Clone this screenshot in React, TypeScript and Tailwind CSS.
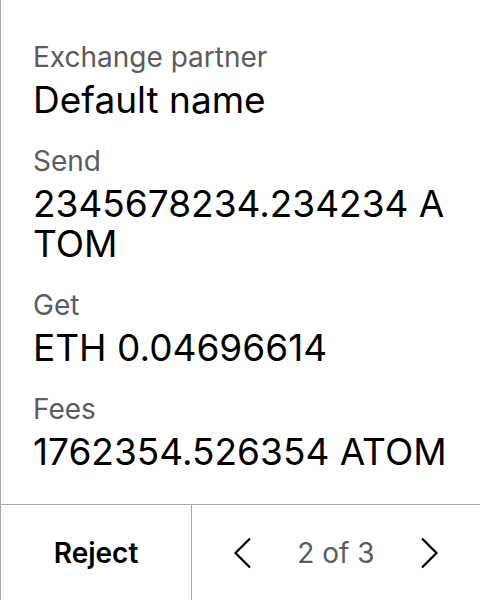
import React from 'react';

const rows = [
  { label: 'Exchange partner', value: 'Default name' },
  { label: 'Send', value: '2345678234.234234 ATOM' },
  { label: 'Get', value: 'ETH 0.04696614' },
  { label: 'Fees', value: '1762354.526354 ATOM' },
];

function Chevron({ dir }: { dir: 'left' | 'right' }) {
  return (
    <svg width="20" height="32" viewBox="0 0 20 32" fill="none" stroke="#000" strokeWidth="2.2">
      {dir === 'left' ? <path d="M18 1.5 L3.5 16 L18 30.5" /> : <path d="M2 1.5 L16.5 16 L2 30.5" />}
    </svg>
  );
}

export default function App() {
  return (
    <div
      className="w-[480px] h-[600px] flex flex-col bg-white border-l border-[#a8a8a8]"
      style={{ fontFamily: 'Inter, "Noto Sans", sans-serif' }}
    >
      <div className="flex-1 pl-8 pr-8 pt-[40px] flex flex-col gap-[24px]">
        {rows.map((r) => (
          <div key={r.label} className="flex flex-col gap-[6px]">
            <div className="text-[28px] leading-[34px] text-[#5c5c5c]">{r.label}</div>
            <div className="text-[37px] leading-[40px] text-black break-all">{r.value}</div>
          </div>
        ))}
      </div>
      <div className="h-[96px] flex border-t border-[#a8a8a8]">
        <div className="w-[191px] flex items-center justify-center border-r border-[#a8a8a8]">
          <span className="text-[28px] font-semibold text-black">Reject</span>
        </div>
        <div className="flex-1 flex items-center justify-center gap-[45px]">
          <Chevron dir="left" />
          <span className="text-[28px] text-[#5c5c5c]">2 of 3</span>
          <Chevron dir="right" />
        </div>
      </div>
    </div>
  );
}
